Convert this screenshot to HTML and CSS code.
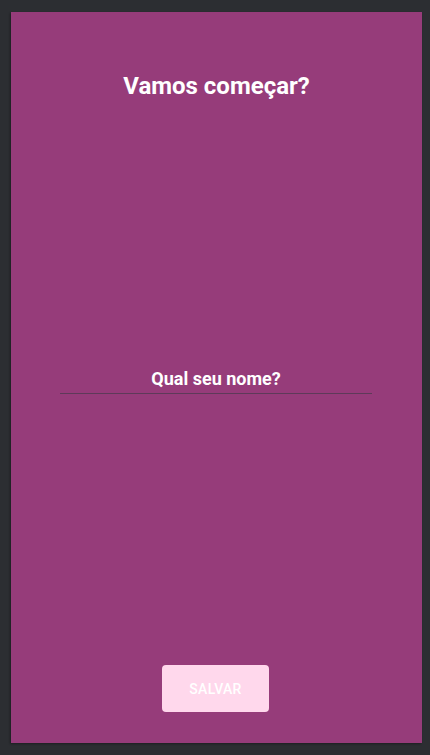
FILE: index.html
```html
<!DOCTYPE html>
<html lang="pt">
<head>
<meta charset="utf-8">
<link rel="stylesheet" href="styles.css">
</head>
<body>
<main class="screen">
  <h1 class="title">Vamos começar?</h1>
  <div class="field">
    <input class="name-input" type="text" placeholder="Qual seu nome?">
  </div>
  <button class="save" type="button">SALVAR</button>
</main>
</body>
</html>
```
FILE: styles.css
```css
html, body {
  margin: 0;
  padding: 0;
  background: #2c2e32;
  height: 100%;
}
body {
  padding: 12px 8px 12px 11px;
  box-sizing: border-box;
  font-family: Roboto, "Noto Sans", sans-serif;
}
.screen {
  height: 731px;
  background: #963c7a;
  box-shadow: -1px 1px 2px rgba(0,0,0,0.35);
  display: flex;
  flex-direction: column;
  align-items: center;
}
.title {
  margin: 59px 0 0;
  color: #ffffff;
  font-size: 24px;
  font-weight: 700;
  line-height: 30px;
}
.field {
  margin-top: 266px;
  width: 312px;
  margin-right: 1px;
}
.name-input {
  display: block;
  width: 100%;
  box-sizing: border-box;
  border: none;
  border-bottom: 1px solid #5e3a59;
  background: transparent;
  text-align: center;
  font-family: Roboto, sans-serif;
  font-size: 18px;
  font-weight: 700;
  color: #ffffff;
  padding: 0 0 4px;
  height: 27px;
  outline: none;
}
.name-input::placeholder {
  color: #ffffff;
  opacity: 1;
}
.save {
  margin-top: auto;
  margin-bottom: 31px;
  margin-right: 2px;
  width: 107px;
  height: 47px;
  border: none;
  border-radius: 4px;
  background: #ffd8ec;
  color: #ffffff;
  font-family: Roboto, sans-serif;
  font-size: 14px;
  font-weight: 500;
  letter-spacing: 0.3px;
}
```
